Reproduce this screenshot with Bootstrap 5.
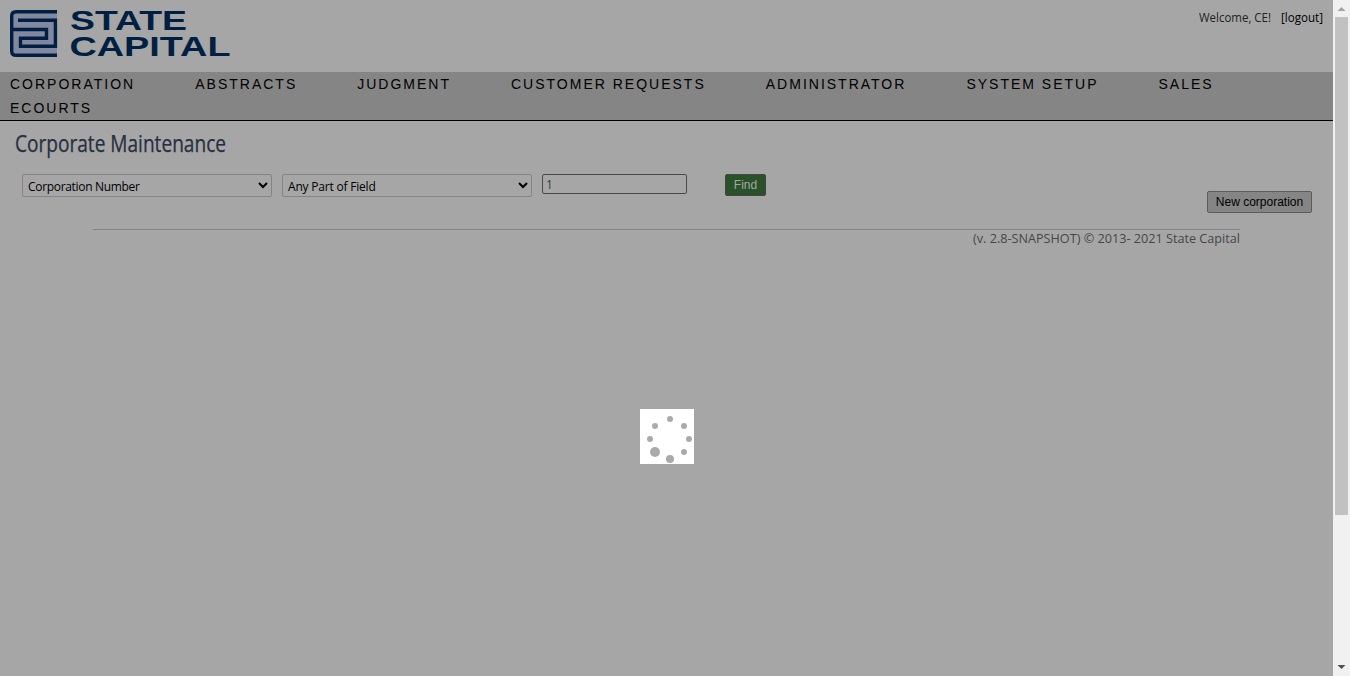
<!DOCTYPE html>
<html lang="en">
<head>
<meta charset="utf-8">
<title>Corporate Maintenance</title>
<link rel="stylesheet" href="https://cdn.jsdelivr.net/npm/bootstrap@5.3.0/dist/css/bootstrap.min.css">
<style>
html,body{height:100%;overflow:hidden}
body{background:#a6a6a6;font:12px/16px "Open Sans","Noto Sans",sans-serif;color:#222}
.page{width:1333px}
.top{height:72px;padding:9px 10px 0}
.welcome{height:17px}
.fit{display:block;overflow:visible}
.emblem{width:60px;height:49px}
.wordmark{overflow:visible}
.menu{height:49px;background:#858585;border-bottom:1px solid #000;padding-left:10px;column-gap:60px;align-content:flex-start}
.menu a{font:14px/24px "Liberation Sans",Arial,sans-serif;letter-spacing:2px;color:#000;text-decoration:none;white-space:nowrap}
.heading{height:53px;padding:10px 0 0 15px;margin:0}
.search{height:55px;padding-left:22px}
.search select{width:250px;height:23px;margin-right:10px;padding:2px 2px 0 1px;border:1px solid #858585;border-radius:2px;background:#a6a6a6;color:#000;font:12px/18px "Open Sans","Noto Sans",sans-serif;letter-spacing:-.32px}
.search select+select{letter-spacing:-.2px}
.search input{width:145px;height:20px;border:1px solid #4a4a4a;border-radius:2px;background:#a6a6a6;color:#373a3c;padding:1px 3px;font:12px "Open Sans","Noto Sans",sans-serif}
.search .find{width:41px;height:22px;margin-left:38px;padding:0;border:1px solid #444;border-radius:2px;background:#2a5229;color:#a6a6a6;font:12px/19px "Liberation Sans",sans-serif}
.search .create{width:105px;height:22px;margin:17px 21px 0 auto;padding:0;border:1px solid #5c5c5c;border-radius:2px;background:#858585;color:#000;font:12px/19px "Liberation Sans",sans-serif}
.foot{width:1147px;margin-left:93px;border-top:1px solid #858585}
.spin{position:fixed;left:640px;top:409px;width:54px;height:55px;background:#fff}
.scroller{width:17px;background:#f1f1f1}
.thumb{width:13px;height:498px;background:#c1c1c1}
</style>
</head>
<body class="d-flex">
<div class="page">
  <header class="top d-flex justify-content-between">
    <div class="d-flex">
      <svg class="emblem" viewBox="10 9 60 49" aria-hidden="true">
        <path d="M57 11.5H16Q11.5 11.5 11.5 16V51Q11.5 55.5 16 55.5H57V48H57V19Z" fill="#8288a0"/>
        <path d="M57 11.7H16Q11.7 11.7 11.7 16V51Q11.7 55.3 16 55.3H57M18 20.3H55.4V46.3H20.5V38.2H46.5V29.5H12" fill="none" stroke="#001f42" stroke-width="3.4"/>
      </svg>
      <svg class="wordmark" width="162" height="49" viewBox="70 9 162 49" font-family="Liberation Sans, Arial, sans-serif" font-weight="bold" font-size="27.5" fill="#001f42">
        <text x="70" y="29.7" textLength="117" lengthAdjust="spacingAndGlyphs">STATE</text>
        <text x="69.5" y="56" textLength="161" lengthAdjust="spacingAndGlyphs">CAPITAL</text>
      </svg>
    </div>
    <svg class="fit welcome" width="125" height="17" viewBox="1198 9 125 17" font-size="12">
      <text x="1199" y="22" textLength="72" lengthAdjust="spacingAndGlyphs" fill="#222">Welcome, CE!</text>
      <text x="1281" y="22" textLength="42" lengthAdjust="spacingAndGlyphs" fill="#000">[logout]</text>
    </svg>
  </header>
  <nav class="menu d-flex flex-wrap">
    <a href="#">CORPORATION</a><a href="#">ABSTRACTS</a><a href="#">JUDGMENT</a><a href="#">CUSTOMER REQUESTS</a><a href="#">ADMINISTRATOR</a><a href="#">SYSTEM SETUP</a><a href="#">SALES</a><a href="#">ECOURTS</a>
  </nav>
  <h1 class="heading"><svg class="fit" width="212" height="28" font-family="Open Sans, sans-serif" font-size="23.5" font-weight="400" fill="#252f40" stroke="#252f40" stroke-width=".25">
    <text x="0" y="21" textLength="211" lengthAdjust="spacingAndGlyphs">Corporate Maintenance</text>
  </svg></h1>
  <form class="search d-flex align-items-start">
    <select><option>Corporation Number</option></select>
    <select><option>Any Part of Field</option></select>
    <input value="1">
    <button type="button" class="btn find">Find</button>
    <button type="button" class="btn create">New corporation</button>
  </form>
  <footer class="foot d-flex justify-content-end">
    <svg class="fit" width="267" height="18" font-size="12.5" fill="#464646"><text x="0" y="13" textLength="267" lengthAdjust="spacingAndGlyphs">(v. 2.8-SNAPSHOT) © 2013- 2021 State Capital</text></svg>
  </footer>
</div>
<aside class="scroller d-flex flex-column align-items-center justify-content-between">
  <svg width="17" height="17"><path d="M4.5 11L8.5 7L12.5 11Z" fill="#a3a3a3"/></svg>
  <div class="thumb mb-auto"></div>
  <svg width="17" height="17"><path d="M4.5 6L8.5 10L12.5 6Z" fill="#505050"/></svg>
</aside>
<div class="spin" role="status"><svg class="d-block" width="54" height="55" fill="#aaa">
  <circle cx="30" cy="10" r="3"/><circle cx="44" cy="17" r="3"/><circle cx="49" cy="30" r="3"/><circle cx="44" cy="43" r="3"/><circle cx="30" cy="50" r="4"/><circle cx="15" cy="43" r="5"/><circle cx="10" cy="30" r="3"/><circle cx="15" cy="17" r="3"/>
</svg></div>
<script src="https://cdn.jsdelivr.net/npm/bootstrap@5.3.0/dist/js/bootstrap.bundle.min.js"></script>
</body>
</html>
